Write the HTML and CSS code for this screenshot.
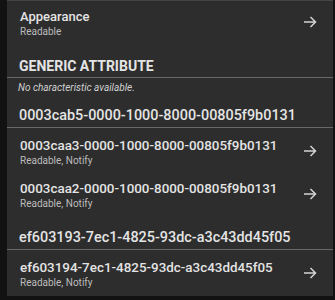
FILE: index.html
```html
<!DOCTYPE html>
<html lang="en">
  <head>
    <meta charset="UTF-8" />
    <meta name="viewport" content="width=device-width, initial-scale=1.0" />
    <title>Service details</title>
    <link rel="stylesheet" href="styles.css">
  </head>
  <body>
    <div class="panel">
      <div class="row">
        <div class="row-text">
          <div class="row-title appearance">Appearance</div>
          <div class="row-sub">Readable</div>
        </div>
        <svg class="arrow" width="14" height="12" viewBox="0 0 14 12">
          <path d="M1 6H12.5M7.5 1L12.5 6L7.5 11" />
        </svg>
      </div>

      <div class="header">GENERIC ATTRIBUTE</div>
      <div class="note">No characteristic available.</div>

      <div class="header uuid">0003cab5-0000-1000-8000-00805f9b0131</div>
      <div class="row">
        <div class="row-text">
          <div class="row-title">0003caa3-0000-1000-8000-00805f9b0131</div>
          <div class="row-sub">Readable, Notify</div>
        </div>
        <svg class="arrow" width="14" height="12" viewBox="0 0 14 12">
          <path d="M1 6H12.5M7.5 1L12.5 6L7.5 11" />
        </svg>
      </div>
      <div class="row">
        <div class="row-text">
          <div class="row-title">0003caa2-0000-1000-8000-00805f9b0131</div>
          <div class="row-sub">Readable, Notify</div>
        </div>
        <svg class="arrow" width="14" height="12" viewBox="0 0 14 12">
          <path d="M1 6H12.5M7.5 1L12.5 6L7.5 11" />
        </svg>
      </div>

      <div class="header uuid">ef603193-7ec1-4825-93dc-a3c43dd45f05</div>
      <div class="row">
        <div class="row-text">
          <div class="row-title">ef603194-7ec1-4825-93dc-a3c43dd45f05</div>
          <div class="row-sub">Readable, Notify</div>
        </div>
        <svg class="arrow" width="14" height="12" viewBox="0 0 14 12">
          <path d="M1 6H12.5M7.5 1L12.5 6L7.5 11" />
        </svg>
      </div>
    </div>
  </body>
</html>
```

FILE: styles.css
```css
* {
  margin: 0;
  padding: 0;
  box-sizing: border-box;
}
body {
  font-family: Roboto, "Noto Sans", sans-serif;
  background: #121212;
  height: 300px;
  overflow: hidden;
}
.panel {
  margin-left: 7px;
  width: 326px;
  height: 296px;
  background: #2d2d2d;
  border-top: 1px solid #444;
  color: #e4e4e4;
}
.row {
  display: flex;
  align-items: center;
  justify-content: space-between;
  padding: 10px 16px 3px 13px;
}
.row:first-child {
  padding-top: 7.5px;
}
.row-title {
  font-size: 13.4px;
  font-weight: 500;
  line-height: 16px;
  white-space: nowrap;
}
.row-title.appearance {
  font-size: 13px;
}
.row-sub {
  font-size: 10px;
  line-height: 14px;
  color: #bcbcbc;
}
.arrow {
  fill: none;
  stroke: #d4d4d4;
  stroke-width: 1.5;
  margin-top: -4px;
}
.header {
  padding: 15px 12px 2px 12px;
  font-size: 14px;
  font-weight: 700;
  line-height: 18px;
  border-bottom: 1px solid #686868;
  white-space: nowrap;
}
.header.uuid {
  font-size: 14.4px;
  font-weight: 500;
}
.note {
  padding: 3px 11px 0 11px;
  font-size: 10px;
  font-style: italic;
  line-height: 14px;
  color: #d0d0d0;
}
.note + .header {
  padding-top: 12px;
}
```
